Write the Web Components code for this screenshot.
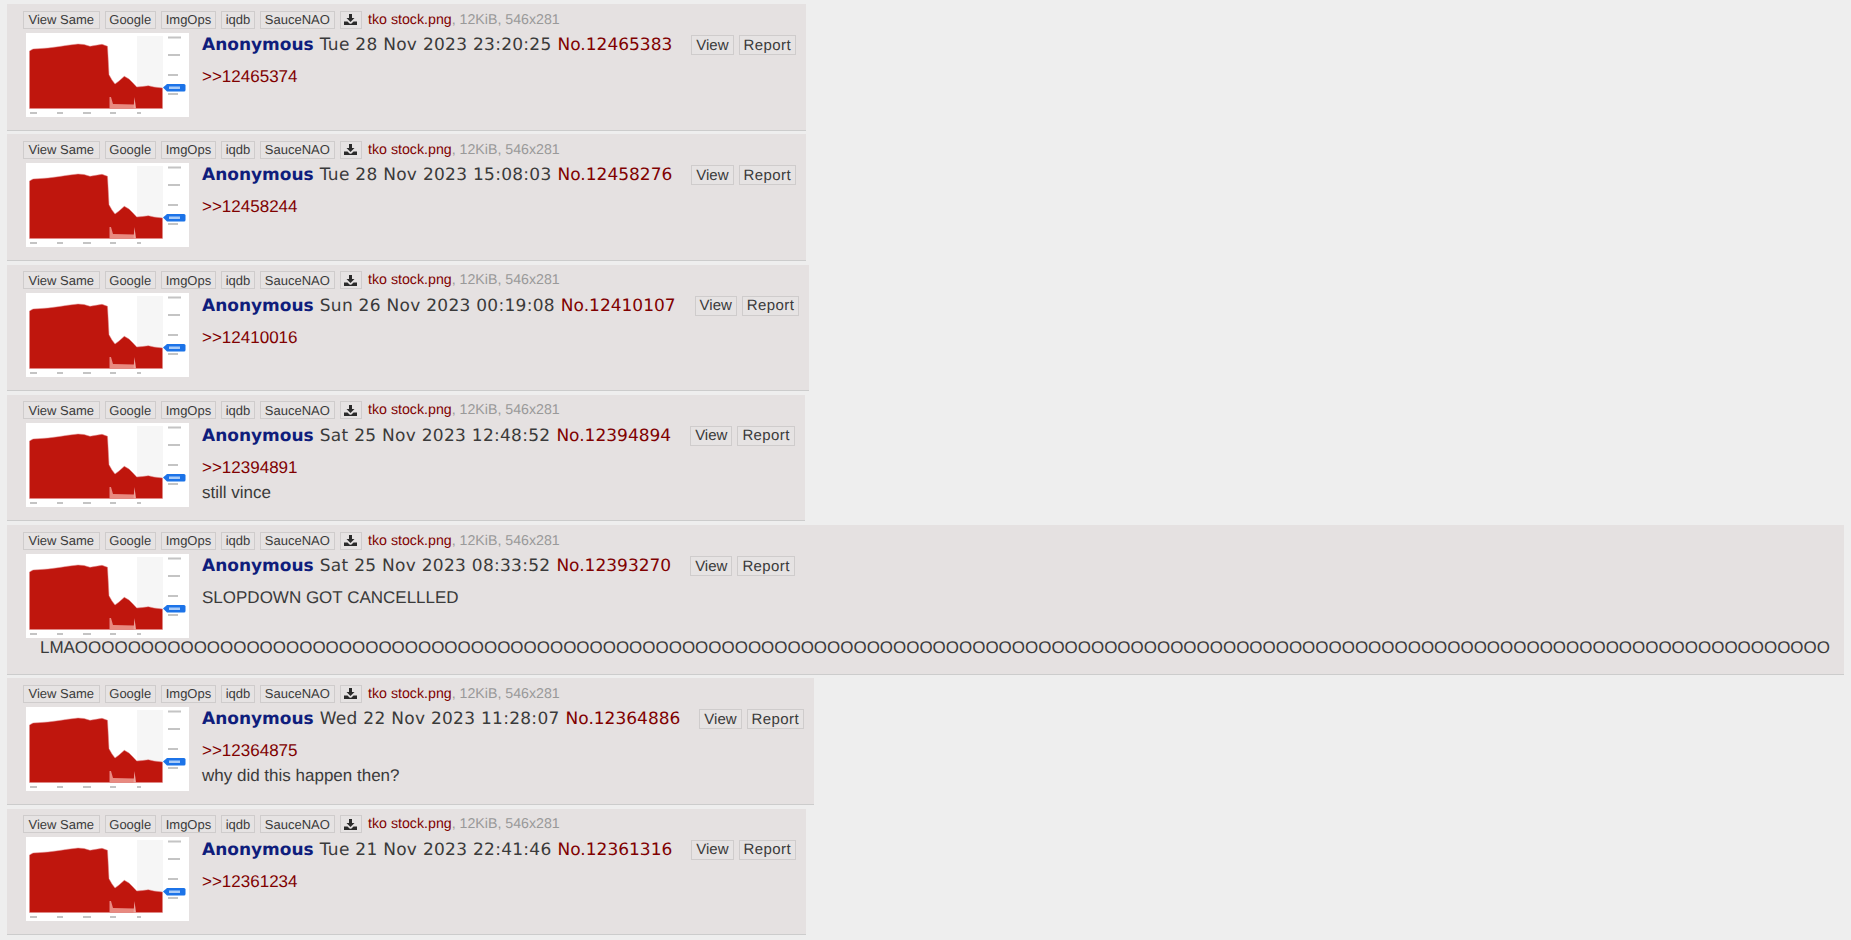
<!DOCTYPE html>
<html>
<head>
<meta charset="utf-8">
<style>
html, body { margin: 0; padding: 0; background: #eeeeee; }
body { padding: 4.200px 7px 0 7px; font-family: "Liberation Sans", Arial, sans-serif; color: #3a3a3a; text-rendering: geometricPrecision; }
</style>
</head>
<body>
<post-item name="Anonymous" date="Tue 28 Nov 2023 23:20:25" no="12465383"><quote-link>&gt;&gt;12465374</quote-link></post-item>
<post-item name="Anonymous" date="Tue 28 Nov 2023 15:08:03" no="12458276"><quote-link>&gt;&gt;12458244</quote-link></post-item>
<post-item name="Anonymous" date="Sun 26 Nov 2023 00:19:08" no="12410107"><quote-link>&gt;&gt;12410016</quote-link></post-item>
<post-item name="Anonymous" date="Sat 25 Nov 2023 12:48:52" no="12394894"><quote-link>&gt;&gt;12394891</quote-link><div>still vince</div></post-item>
<post-item name="Anonymous" date="Sat 25 Nov 2023 08:33:52" no="12393270"><div>SLOPDOWN GOT CANCELLLED</div><div slot="tail" id="lmao"></div></post-item>
<post-item name="Anonymous" date="Wed 22 Nov 2023 11:28:07" no="12364886"><quote-link>&gt;&gt;12364875</quote-link><div>why did this happen then?</div></post-item>
<post-item name="Anonymous" date="Tue 21 Nov 2023 22:41:46" no="12361316"><quote-link>&gt;&gt;12361234</quote-link></post-item>

<script>
document.getElementById('lmao').textContent = 'LMA' + 'O'.repeat(133)

class ToolButton extends HTMLElement {
    constructor() {
        super();
        let root = this.attachShadow({mode: 'open'})
        root.innerHTML = `
            <style>
            :host {
                display: inline-flex;
                align-items: center;
                height: 16px;
                padding: 0 3.750px;
                border: 1px solid #cfcccc;
                background: #e6e3e3;
                font-size: 13px;
                color: #3a3a3a;
                white-space: nowrap;
            }
            :host([big]) {
                height: 18px;
                padding: 0 4px;
                font-size: 15px;
            }
            </style>
            <slot></slot>
        `
    }
}
window.customElements.define("tool-button", ToolButton)

class QuoteLink extends HTMLElement {
    constructor() {
        super();
        let root = this.attachShadow({mode: 'open'})
        root.innerHTML = `
            <style>
            :host { display: block; color: #800000; }
            </style>
            <slot></slot>
        `
    }
}
window.customElements.define("quote-link", QuoteLink)

class StockThumb extends HTMLElement {
    constructor() {
        super();
        let root = this.attachShadow({mode: 'open'})
        root.innerHTML = `
            <style>
            :host { display: block; flex: none; width: 163px; height: 84px; background: #fff; }
            svg { display: block; }
            </style>
            <svg width="163" height="84" viewBox="0 0 163 84">
                <defs><filter id="soft" x="-5%" y="-5%" width="110%" height="110%"><feGaussianBlur stdDeviation=".45"/></filter></defs>
                <g filter="url(#soft)">
                    <rect x="111" y="3" width="26" height="72" fill="#f6f6f6"/>
                    <path d="M3.500 18 L7 16 L12 15.700 L22 15 L32 13.700 L42 12.200 L52 11 L58 11.500 L64 13.300 L70 12.300 L76 11.300 L81.500 13.300 L83 41.700 L86 47 L89 51 L93 48 L98.300 43.300 L103 46 L107 50 L110.700 54 L116 53.600 L122.300 52.700 L128 54 L136.500 55 L136.500 75.500 L3.500 75.500 Z" fill="#bf1310" stroke="#e08a85" stroke-width=".5"/>
                    <path d="M83.500 64 L85 64 L87 71 L108 71.500 L108 75.500 L83.500 75.500 Z" fill="#e88a80"/>
                    <path d="M108.500 64 L110 75.500 L107.500 75.500 Z" fill="#eba59c"/>
                    <g fill="#c4c4c4">
                        <rect x="142" y="3.500" width="13" height="2"/>
                        <rect x="142" y="21" width="12" height="2"/>
                        <rect x="142" y="41" width="10" height="2"/>
                        <rect x="142" y="60" width="10" height="2"/>
                        <rect x="4" y="79" width="7" height="2"/>
                        <rect x="31" y="79" width="6" height="2"/>
                        <rect x="57" y="79" width="8" height="2"/>
                        <rect x="84" y="79" width="6" height="2"/>
                        <rect x="111" y="79" width="4" height="2"/>
                    </g>
                    <path d="M137 54.500 L141 51 L158 51 Q159.500 51 159.500 52.500 L159.500 57 Q159.500 58.500 158 58.500 L141 58.500 Z" fill="#1a73e8"/>
                    <rect x="143" y="53.500" width="11" height="2.500" fill="#a9cbf7"/>
                </g>
            </svg>
        `
    }
}
window.customElements.define("stock-thumb", StockThumb)

class PostItem extends HTMLElement {
    constructor() {
        super();
        let root = this.attachShadow({mode: 'open'})
        root.innerHTML = `
            <style>
            :host {
                display: block;
                width: fit-content;
                box-sizing: border-box;
                margin-bottom: 3.750px;
                padding: 6.500px 10px 13px 16px;
                background: #e5e1e1;
                border-bottom: 1px solid #cccccc;
            }
            #tools { display: flex; align-items: center; gap: 5px; height: 18px; }
            #tools tool-button:first-child { padding: 0 4.500px; }
            #file { margin-left: 1px; font-size: 14.200px; color: #800000; white-space: nowrap; }
            #file span { color: #999; }
            #body { display: flex; margin-top: 4px; padding-left: 3px; }
            #right { margin-left: 13px; flex: 1; }
            #head { display: flex; align-items: center; height: 20px; margin-top: 2.500px; font-family: "DejaVu Sans", Verdana, sans-serif; font-size: 17px; white-space: nowrap; }
            #name { font-weight: bold; color: #0f1d7c; margin-right: 6px; }
            #date { letter-spacing: .28px; }
            #no { color: #800000; margin-left: 6px; }
            #actions { display: flex; gap: 5px; margin-left: 19px; font-family: "Liberation Sans", Arial, sans-serif; }
            #msg { margin-top: 9px; font-size: 17px; line-height: 25px; color: #3a3a3a; }
            #tail { display: block; font-size: 17px; line-height: 20px; color: #3a3a3a; white-space: nowrap; }
            ::slotted([slot=tail]) { padding: 0 4px 0 17px; margin-bottom: 3px; letter-spacing: -.027px; }
            svg { display: block; }
            </style>
            <div id="tools">
                <tool-button>View Same</tool-button>
                <tool-button>Google</tool-button>
                <tool-button>ImgOps</tool-button>
                <tool-button>iqdb</tool-button>
                <tool-button>SauceNAO</tool-button>
                <tool-button>
                    <svg width="13" height="11" viewBox="0 0 13 11"><path fill="#2b2b2b" d="M5 0 H8 V4 H10.500 L6.500 8 L2.500 4 H5 Z M0 7.500 H3.500 L5.500 9.500 Q6.500 10.200 7.500 9.500 L9.500 7.500 H13 V11 H0 Z"/></svg>
                </tool-button>
                <div id="file">tko stock.png<span>, 12KiB, 546x281</span></div>
            </div>
            <div id="body">
                <stock-thumb></stock-thumb>
                <div id="right">
                    <div id="head">
                        <span id="name"></span><span id="date"></span><span id="no"></span>
                        <div id="actions"><tool-button big>View</tool-button><tool-button big style="letter-spacing: .4px">Report</tool-button></div>
                    </div>
                    <div id="msg"><slot></slot></div>
                </div>
            </div>
            <slot name="tail" id="tail"></slot>
        `
    }
    connectedCallback() {
        this.shadowRoot.getElementById('name').textContent = this.getAttribute('name')
        this.shadowRoot.getElementById('date').textContent = this.getAttribute('date')
        this.shadowRoot.getElementById('no').textContent = 'No.' + this.getAttribute('no')
    }
}
window.customElements.define("post-item", PostItem)
</script>
</body>
</html>
